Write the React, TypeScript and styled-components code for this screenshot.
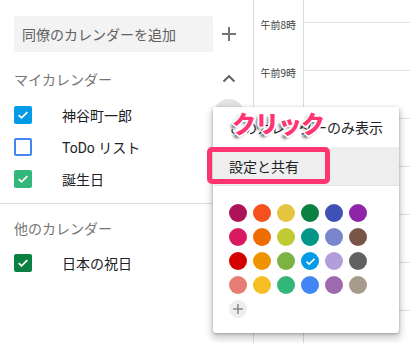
import React from "react";
import styled, { createGlobalStyle, css } from "styled-components";

const GlobalStyle = createGlobalStyle`
  html, body { margin: 0; padding: 0; background: #fff; }
  body { font-family: Roboto, "Noto Sans CJK JP", sans-serif; }
  * { box-sizing: border-box; }
`;

const Page = styled.div`
  position: relative;
  width: 410px;
  height: 343px;
  overflow: hidden;
  display: flex;
  background: #fff;
`;

const Sidebar = styled.aside`
  width: 254px;
  height: 100%;
  border-right: 1px solid #dadce0;
  display: flex;
  flex-direction: column;
`;

const Gutter = styled.div`
  width: 50px;
  height: 100%;
  border-right: 1px solid #dadce0;
  padding-top: 19px;
  display: flex;
  flex-direction: column;
`;

const TimeLabel = styled.div`
  height: 48px;
  flex: none;
  font-family: "Noto Sans CJK JP", sans-serif;
  font-size: 10px;
  line-height: 12px;
  color: #3c4043;
  text-align: right;
  padding-right: 7px;
`;

const Grid = styled.div`
  flex: 1;
  padding-top: 22px;
  display: flex;
  flex-direction: column;
`;

const HourLine = styled.div`
  height: 48px;
  flex: none;
  border-top: 1px solid #e0e0e0;
`;

const SearchRow = styled.div`
  display: flex;
  align-items: center;
  margin-top: 16px;
  padding: 0 8px 0 14px;
  height: 36px;
`;

const SearchBox = styled.div`
  width: 199px;
  height: 36px;
  background: #f3f3f3;
  border-radius: 2px;
  padding-left: 8px;
  display: flex;
  align-items: center;
  font-family: "Noto Sans CJK JP", sans-serif;
  font-size: 14px;
  color: #616161;
`;

const IconSlot = styled.div<{ $active?: boolean }>`
  width: 32px;
  height: 32px;
  flex: none;
  border-radius: 50%;
  display: flex;
  align-items: center;
  justify-content: center;
  background: ${(p) => (p.$active ? "#e3e3e3" : "transparent")};
  color: #757575;
`;

const SectionHeader = styled.div<{ $top: number }>`
  height: 32px;
  margin-top: ${(p) => p.$top}px;
  padding: 0 8px 0 14px;
  display: flex;
  align-items: center;
  justify-content: space-between;
  font-family: "Noto Sans CJK JP", sans-serif;
  font-size: 14px;
  color: #757575;
`;

const CalendarRow = styled.div<{ $top?: number }>`
  height: 32px;
  margin-top: ${(p) => p.$top ?? 0}px;
  padding: 0 8px 0 14px;
  display: flex;
  align-items: center;
`;

const Box = styled.div<{ $color: string; $checked: boolean }>`
  width: 18px;
  height: 18px;
  flex: none;
  border-radius: 2px;
  display: flex;
  align-items: center;
  justify-content: center;
  ${(p) =>
    p.$checked
      ? css`background: ${p.$color};`
      : css`border: 2px solid ${p.$color}; background: #fff;`}
`;

const Label = styled.span`
  margin-left: 30px;
  flex: 1;
  font-family: Roboto, "Noto Sans CJK JP", sans-serif;
  font-size: 14px;
  color: #202124;
`;

const Divider = styled.div`
  margin-top: 8px;
  height: 1px;
  background: #dadce0;
  flex: none;
`;

const Popup = styled.div`
  position: absolute;
  left: 213px;
  top: 107px;
  width: 186px;
  height: 226px;
  background: #fff;
  border-radius: 3px;
  box-shadow: 0 4px 7px 2px rgba(0, 0, 0, 0.18), 0 1px 3px rgba(0, 0, 0, 0.25);
  display: flex;
  flex-direction: column;
`;

const MenuItem = styled.div<{ $active?: boolean }>`
  height: ${(p) => (p.$active ? 38 : 40)}px;
  flex: none;
  padding-left: 16px;
  display: flex;
  align-items: center;
  font-family: "Noto Sans CJK JP", sans-serif;
  font-size: 14px;
  color: #202124;
  background: ${(p) => (p.$active ? "#eeeeee" : "#fff")};
`;

const MenuSep = styled.div`
  height: 1px;
  background: #e6e6e6;
  flex: none;
`;

const Palette = styled.div`
  display: grid;
  grid-template-columns: repeat(6, 24px);
  grid-auto-rows: 24px;
  padding: 15px 0 0 13px;
`;

const Swatch = styled.div<{ $color: string }>`
  width: 18px;
  height: 18px;
  border-radius: 50%;
  background: ${(p) => p.$color};
  justify-self: center;
  align-self: center;
  display: flex;
  align-items: center;
  justify-content: center;
`;

const PinkBox = styled.div`
  position: absolute;
  left: 207px;
  top: 147px;
  width: 123px;
  height: 37px;
  border: 5px solid #ff3572;
  border-radius: 5px;
`;

const ClickLabel = styled.div`
  position: absolute;
  left: 232px;
  top: 108px;
  font-family: "Noto Sans CJK JP", sans-serif;
  font-weight: 900;
  font-size: 24px;
  line-height: 30px;
  letter-spacing: -1px;
  color: #ff3572;
  text-shadow: -1px -1px 0 #fff, 1px -1px 0 #fff, -1px 1px 0 #fff, 1px 1px 0 #fff,
    0 2px 0 #fff, 2px 0 0 #fff, -2px 0 0 #fff, 0 -2px 0 #fff,
    -3px 3px 3px rgba(0, 0, 0, 0.6);
`;

const Check = ({ size = 14 }: { size?: number }) => (
  <svg width={size} height={size} viewBox="0 0 18 18">
    <path d="M3.5 9.2l3.6 3.5L14.6 5.4" fill="none" stroke="#fff" strokeWidth="2.2" />
  </svg>
);

const Plus = ({ size = 14, color = "#757575", w = 2 }: { size?: number; color?: string; w?: number }) => (
  <svg width={size} height={size} viewBox="0 0 14 14">
    <path d="M7 0v14M0 7h14" stroke={color} strokeWidth={w} fill="none" />
  </svg>
);

const ChevronUp = () => (
  <svg width="14" height="10" viewBox="0 0 14 10">
    <path d="M1.5 7.5L7 2.2l5.5 5.3" stroke="#5f6368" strokeWidth="2" fill="none" />
  </svg>
);

const colors = [
  "#ad1457", "#f4511e", "#e4c441", "#0b8043", "#3f51b5", "#8e24aa",
  "#d81b60", "#ef6c00", "#c0ca33", "#009688", "#7986cb", "#795548",
  "#d50000", "#f09300", "#7cb342", "#039be5", "#b39ddb", "#616161",
  "#e67c73", "#f6bf26", "#33b679", "#4285f4", "#9e69af", "#a79b8e",
];

const myCalendars = [
  { name: "神谷町一郎", color: "#039be5", checked: true, active: true },
  { name: "ToDo リスト", color: "#4285f4", checked: false },
  { name: "誕生日", color: "#33b679", checked: true },
];

export default function App() {
  return (
    <>
      <GlobalStyle />
      <Page>
        <Sidebar>
          <SearchRow>
            <SearchBox>同僚のカレンダーを追加</SearchBox>
            <IconSlot>
              <Plus />
            </IconSlot>
          </SearchRow>
          <SectionHeader $top={11}>
            <span>マイカレンダー</span>
            <IconSlot>
              <ChevronUp />
            </IconSlot>
          </SectionHeader>
          {myCalendars.map((c, i) => (
            <CalendarRow key={c.name} $top={i === 0 ? 4 : 0}>
              <Box $color={c.color} $checked={c.checked}>
                {c.checked && <Check />}
              </Box>
              <Label>{c.name}</Label>
              <IconSlot $active={c.active} />
            </CalendarRow>
          ))}
          <Divider />
          <SectionHeader $top={8}>
            <span>他のカレンダー</span>
          </SectionHeader>
          <CalendarRow $top={3}>
            <Box $color="#0b8043" $checked>
              <Check />
            </Box>
            <Label>日本の祝日</Label>
          </CalendarRow>
        </Sidebar>
        <Gutter>
          {["午前8時", "午前9時"].map((t) => (
            <TimeLabel key={t}>{t}</TimeLabel>
          ))}
        </Gutter>
        <Grid>
          {Array.from({ length: 7 }).map((_, i) => (
            <HourLine key={i} />
          ))}
        </Grid>
        <Popup>
          <MenuItem>このカレンダーのみ表示</MenuItem>
          <MenuItem $active>設定と共有</MenuItem>
          <MenuSep />
          <Palette>
            {colors.map((c) => (
              <Swatch key={c} $color={c}>
                {c === "#039be5" && <Check size={13} />}
              </Swatch>
            ))}
            <Swatch $color="#eeeeee">
              <Plus size={10} color="#8a8a8a" w={2.2} />
            </Swatch>
          </Palette>
        </Popup>
        <PinkBox />
        <ClickLabel>クリック</ClickLabel>
      </Page>
    </>
  );
}
